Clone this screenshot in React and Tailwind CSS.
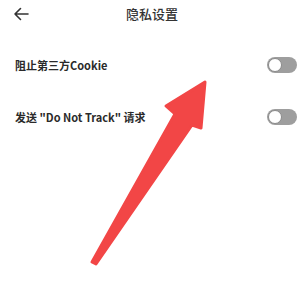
import React from 'react';

function Toggle() {
  return (
    <div className="relative w-[30px] h-[16px] rounded-full bg-[#9e9e9e]">
      <div className="absolute left-[1px] top-[1px] w-[14px] h-[14px] rounded-full bg-white border border-[#8a8a8a]" />
    </div>
  );
}

function Row({ label }) {
  return (
    <div className="flex items-center justify-between h-[52px] pl-[15px] pr-[7px]">
      <span className="text-[11px] font-semibold text-[#2a2a2a]">{label}</span>
      <Toggle />
    </div>
  );
}

export default function App() {
  return (
    <div
      className="relative w-[304px] h-[306px] bg-white overflow-hidden"
      style={{ fontFamily: '"Noto Sans CJK SC", "Noto Sans", sans-serif' }}
    >
      {/* Header */}
      <div className="relative flex items-center justify-center h-[28px]">
        <svg className="absolute left-[13px] top-[7px]" width="16" height="14" viewBox="0 0 16 14" fill="none" stroke="#333" strokeWidth="1.6" strokeLinecap="round" strokeLinejoin="round">
          <path d="M15 7H2M7.5 1.5L2 7l5.5 5.5" />
        </svg>
        <span className="text-[13px] font-medium text-[#333]">隐私设置</span>
      </div>

      <div className="mt-[11px]">
        <Row label="阻止第三方Cookie" />
        <Row label={'发送 "Do Not Track" 请求'} />
      </div>

      {/* Annotation arrow */}
      <svg className="absolute inset-0 pointer-events-none" width="304" height="306" viewBox="0 0 304 306">
        <polygon
          points="205,82 166,106 175,114 92,262 96,264 192,125 201,128"
          fill="#f24646"
          stroke="#f24646"
          strokeWidth="3"
          strokeLinejoin="round"
        />
      </svg>
    </div>
  );
}
